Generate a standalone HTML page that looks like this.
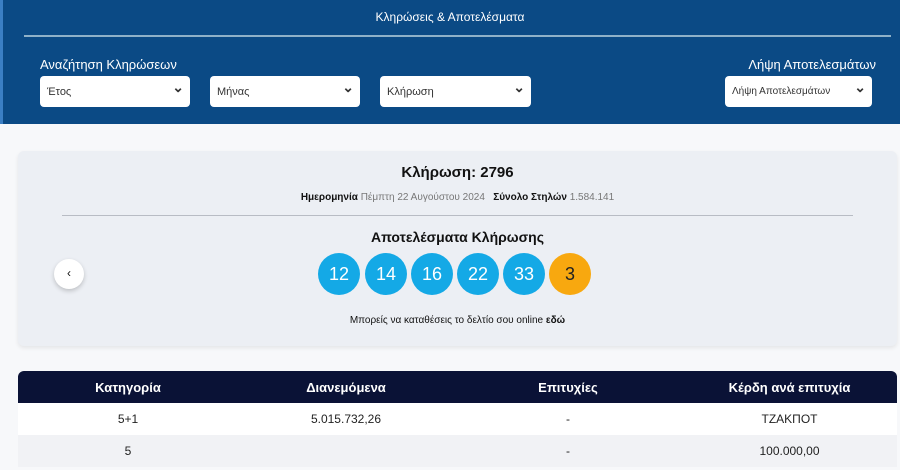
<!DOCTYPE html>
<html><head><meta charset="utf-8"><style>
*{margin:0;padding:0;box-sizing:border-box}
body{width:900px;height:470px;overflow:hidden;background:#f7f8fa;font-family:"Liberation Sans Narrow","Liberation Sans",sans-serif;color:#111;position:relative}
.hdr{position:absolute;left:0;top:0;width:900px;height:124px;background:#0b4a85;border-left:3px solid #3b7fc4}
.t{position:absolute;top:10px;width:900px;text-align:center;color:#fff;font-size:12px}
.line{position:absolute;left:24px;top:35px;width:867px;height:2px;background:#8fb1c8}
.lbl{position:absolute;top:57px;color:#fff;font-size:13px}
.sel{position:absolute;top:76px;height:31px;background:#fff;border-radius:4px;font-size:11px;color:#333;padding:10px 7px;}
.sel:after{content:"⌄";position:absolute;right:6px;top:3px;font-size:14px;font-weight:bold}
.card{position:absolute;left:18px;top:151px;width:879px;height:195px;background:#eceff4;border-radius:6px;box-shadow:0 2px 4px rgba(0,0,0,.08)}
.c{position:absolute;width:879px;text-align:center;left:0}
.ball{position:absolute;top:253px;width:42px;height:42px;border-radius:50%;background:#14a9e6;color:#fff;font-size:18px;text-align:center;line-height:42px}
table{position:absolute;left:18px;top:371px;width:879px;border-collapse:collapse;font-size:12px;table-layout:fixed}
th{background:#0a1236;color:#fff;height:32px;font-weight:bold;font-size:13px}
td{text-align:center;height:32px;color:#222}
th:first-child{border-top-left-radius:6px}th:last-child{border-top-right-radius:6px}
</style></head><body>
<div class="hdr"></div>
<div class="t">Κληρώσεις &amp; Αποτελέσματα</div>
<div class="line"></div>
<div class="lbl" style="left:40px">Αναζήτηση Κληρώσεων</div>
<div class="lbl" style="right:24px">Λήψη Αποτελεσμάτων</div>
<div class="sel" style="left:40px;width:150px">Έτος</div>
<div class="sel" style="left:210px;width:150px">Μήνας</div>
<div class="sel" style="left:380px;width:151px">Κλήρωση</div>
<div class="sel" style="left:725px;width:147px;font-size:10px">Λήψη Αποτελεσμάτων</div>
<div class="card">
<div class="c" style="top:13px;font-size:15px;font-weight:bold">Κλήρωση: 2796</div>
<div class="c" style="top:41px;font-size:10px"><b>Ημερομηνία</b> <span style="color:#777">Πέμπτη 22 Αυγούστου 2024</span> &nbsp; <b>Σύνολο Στηλών</b> <span style="color:#777">1.584.141</span></div>
<div style="position:absolute;left:44px;top:64px;width:791px;height:1px;background:#b8bcc4"></div>
<div class="c" style="top:78px;font-size:14px;font-weight:bold">Αποτελέσματα Κλήρωσης</div>
<div class="c" style="top:164px;font-size:10px">Μπορείς να καταθέσεις το δελτίο σου online <b>εδώ</b></div>
<div style="position:absolute;left:36px;top:108px;width:30px;height:30px;border-radius:50%;background:#fff;box-shadow:0 2px 5px rgba(0,0,0,.2);text-align:center;line-height:28px;font-size:12px">‹</div>
</div>
<div class="ball" style="left:318px">12</div>
<div class="ball" style="left:365px">14</div>
<div class="ball" style="left:411px">16</div>
<div class="ball" style="left:457px">22</div>
<div class="ball" style="left:503px">33</div>
<div class="ball" style="left:549px;background:#f8a80f;color:#222">3</div>
<table>
<colgroup><col style="width:220px"><col style="width:216px"><col style="width:228px"><col style="width:215px"></colgroup>
<tr><th>Κατηγορία</th><th>Διανεμόμενα</th><th>Επιτυχίες</th><th>Κέρδη ανά επιτυχία</th></tr>
<tr style="background:#fff"><td>5+1</td><td>5.015.732,26</td><td>-</td><td>ΤΖΑΚΠΟΤ</td></tr>
<tr style="background:#f1f2f5"><td>5</td><td></td><td>-</td><td>100.000,00</td></tr>
</table>
</body></html>
